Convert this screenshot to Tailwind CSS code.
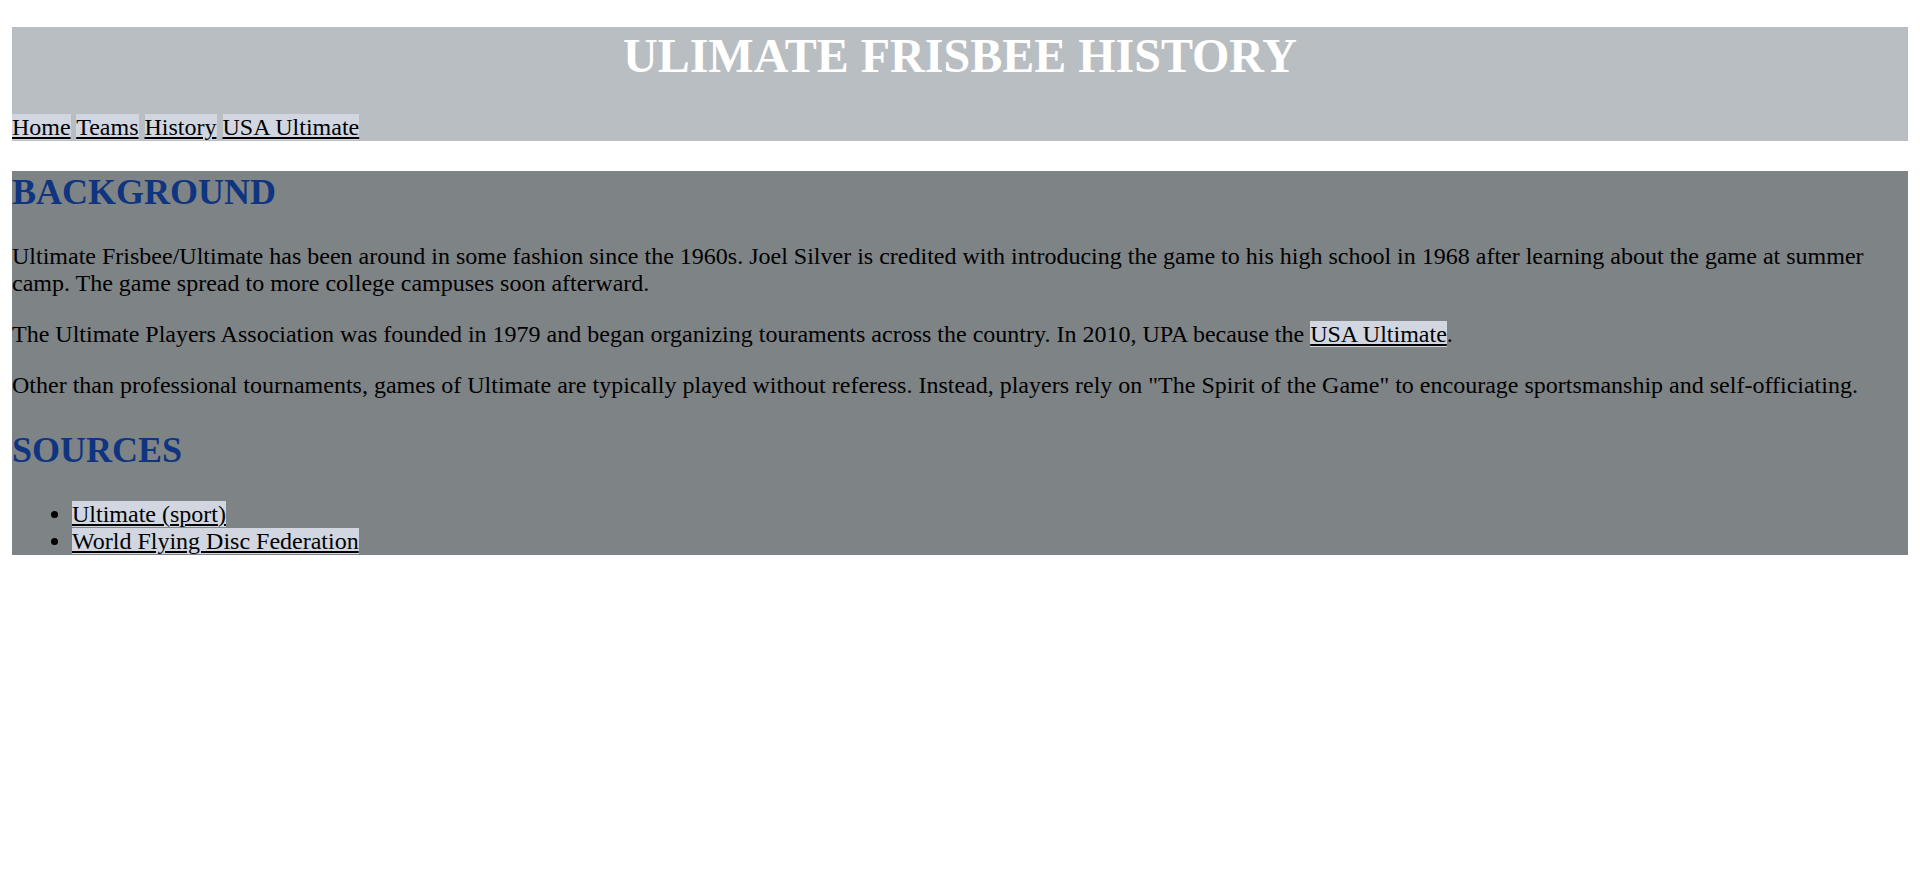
<!DOCTYPE html>
<html lang="en">
<head>
<meta charset="utf-8">
<title>Ultimate Frisbee History</title>
<script src="https://cdn.jsdelivr.net/npm/@tailwindcss/browser@4"></script>
</head>
<body class="bg-white px-3 pt-[27px] pb-3 font-['Liberation_Serif',serif] text-[24px] leading-[27px] text-black">
  <header class="bg-[#b8bec2]">
    <h1 class="mb-[30px] text-center text-[48px] leading-[57px] font-bold text-white">ULIMATE FRISBEE HISTORY</h1>
    <nav>
      <a href="#" class="bg-[#d1d6e0] underline decoration-2 underline-offset-2">Home</a>
      <a href="#" class="bg-[#d1d6e0] underline decoration-2 underline-offset-2">Teams</a>
      <a href="#" class="bg-[#d1d6e0] underline decoration-2 underline-offset-2">History</a>
      <a href="#" class="bg-[#d1d6e0] underline decoration-2 underline-offset-2">USA Ultimate</a>
    </nav>
  </header>
  <main class="mt-[30px] bg-[#7e8386]">
    <h2 class="mb-[30px] text-[36px] leading-[42px] font-bold text-[#0f3580]">BACKGROUND</h2>
    <p class="mb-6">Ultimate Frisbee/Ultimate has been around in some fashion since the 1960s. Joel Silver is credited with introducing the game to his high school in 1968 after learning about the game at summer camp. The game spread to more college campuses soon afterward.</p>
    <p class="mb-6">The Ultimate Players Association was founded in 1979 and began organizing touraments across the country. In 2010, UPA because the <a href="#" class="bg-[#d1d6e0] underline decoration-2 underline-offset-2">USA Ultimate</a>.</p>
    <p>Other than professional tournaments, games of Ultimate are typically played without referess. Instead, players rely on "The Spirit of the Game" to encourage sportsmanship and self-officiating.</p>
    <h2 class="my-[30px] text-[36px] leading-[42px] font-bold text-[#0f3580]">SOURCES</h2>
    <ul class="list-disc pl-[60px]">
      <li><a href="#" class="bg-[#d1d6e0] underline decoration-2 underline-offset-2">Ultimate (sport)</a></li>
      <li><a href="#" class="bg-[#d1d6e0] underline decoration-2 underline-offset-2">World Flying Disc Federation</a></li>
    </ul>
  </main>
</body>
</html>
